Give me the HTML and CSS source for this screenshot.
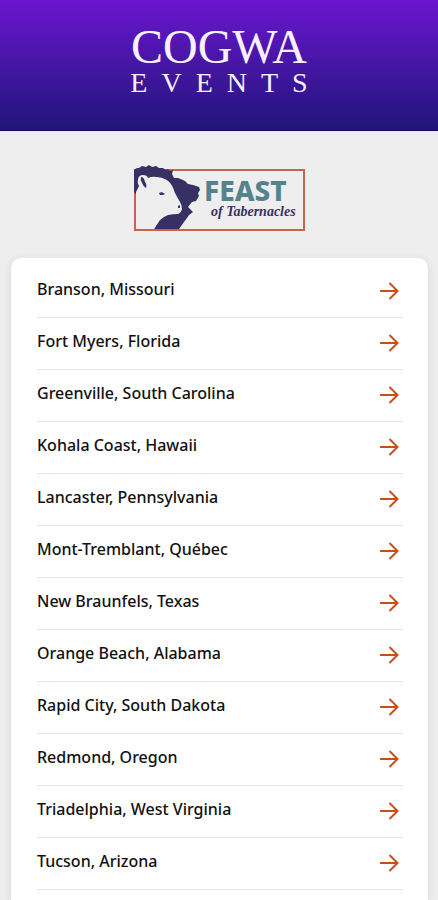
FILE: index.html
```html
<!DOCTYPE html>
<html lang="en">
<head>
<meta charset="utf-8">
<meta name="viewport" content="width=device-width, initial-scale=1">
<title>COGWA Events</title>
<link rel="stylesheet" href="styles.css">
</head>
<body>
<svg class="symbols" aria-hidden="true">
  <symbol id="arrow" viewBox="0 0 20 20">
    <path d="M1 10H18M10.5 2L18.5 10L10.5 18"/>
  </symbol>
</svg>
<header class="header">
  <h1 class="brand">
    <span class="brand-name">COGWA</span>
    <span class="brand-sub">EVENTS</span>
  </h1>
</header>
<main class="main">
  <svg class="feast-logo" viewBox="0 0 171 66" role="img" aria-label="Feast of Tabernacles">
    <rect class="logo-frame" x="1" y="5" width="169" height="60"/>
    <path class="logo-mane" d="M0 27V5L3 3L5 3L8 1L12 2L15 0L18 2L22 1L25 3L29 3L32 5L34 4L36 6L39 5L38 9L40 13L44 13L49 15L51 16L54 19L59 20L65 22L66 25L64 28L65 31L62 36L58 37L54 42L56 44L59 47L55 50L53 53L50 57L45 64H20L25 55Z"/>
    <path class="logo-face" d="M2 27L5 21Q3 18 4 14Q5 10 9 10Q13 10 14 13Q18 11 23 12Q33 13 37 19Q39 22 41 28Q43 32 46 37Q48 40 48 44Q47 48 44 49Q39 49 34 50Q29 52 26 55L20 64H2Z"/>
    <path class="logo-mane" d="M7 12Q10 12 11 17Q13 19 12 23Q9 21 8 18Q6 15 7 12ZM25 28Q28 26 31 29L29 30L26 30ZM44 41L46 40L46 43L44 43Z"/>
    <text class="logo-title" x="70" y="36">FEAST</text>
    <text class="logo-script" x="77" y="51">of Tabernacles</text>
  </svg>
  <nav class="card" aria-label="Feast locations">
    <ul class="list">
      <li><a class="row" href="#branson">Branson, Missouri<svg class="arrow" aria-hidden="true"><use href="#arrow"/></svg></a></li>
      <li><a class="row" href="#fort-myers">Fort Myers, Florida<svg class="arrow" aria-hidden="true"><use href="#arrow"/></svg></a></li>
      <li><a class="row" href="#greenville">Greenville, South Carolina<svg class="arrow" aria-hidden="true"><use href="#arrow"/></svg></a></li>
      <li><a class="row" href="#kohala">Kohala Coast, Hawaii<svg class="arrow" aria-hidden="true"><use href="#arrow"/></svg></a></li>
      <li><a class="row" href="#lancaster">Lancaster, Pennsylvania<svg class="arrow" aria-hidden="true"><use href="#arrow"/></svg></a></li>
      <li><a class="row" href="#mont-tremblant">Mont-Tremblant, Québec<svg class="arrow" aria-hidden="true"><use href="#arrow"/></svg></a></li>
      <li><a class="row" href="#new-braunfels">New Braunfels, Texas<svg class="arrow" aria-hidden="true"><use href="#arrow"/></svg></a></li>
      <li><a class="row" href="#orange-beach">Orange Beach, Alabama<svg class="arrow" aria-hidden="true"><use href="#arrow"/></svg></a></li>
      <li><a class="row" href="#rapid-city">Rapid City, South Dakota<svg class="arrow" aria-hidden="true"><use href="#arrow"/></svg></a></li>
      <li><a class="row" href="#redmond">Redmond, Oregon<svg class="arrow" aria-hidden="true"><use href="#arrow"/></svg></a></li>
      <li><a class="row" href="#triadelphia">Triadelphia, West Virginia<svg class="arrow" aria-hidden="true"><use href="#arrow"/></svg></a></li>
      <li><a class="row" href="#tucson">Tucson, Arizona<svg class="arrow" aria-hidden="true"><use href="#arrow"/></svg></a></li>
    </ul>
  </nav>
</main>
</body>
</html>
```
FILE: styles.css
```css
* {
  box-sizing: border-box;
}

body {
  margin: 0;
  min-height: 100vh;
  display: flex;
  flex-direction: column;
  background: #eeeeee;
  color: #111111;
  font-family: "Noto Sans", sans-serif;
}

.symbols {
  display: none;
}

.header {
  padding: 24px 0 34px;
  background: linear-gradient(#6a16cf, #211579);
  border-bottom: 1px solid #14085f;
}

.brand {
  margin: 0;
  display: flex;
  flex-direction: column;
  align-items: center;
  color: #f6f0ff;
  font-family: "Liberation Serif", serif;
  font-weight: 400;
}

.brand-name {
  font-size: 48px;
  line-height: 46px;
}

.brand-sub {
  padding-left: 14px;
  font-size: 28px;
  line-height: 26px;
  letter-spacing: 14px;
}

.main {
  flex: 1;
  display: flex;
  flex-direction: column;
  padding-top: 34px;
}

.feast-logo {
  width: 171px;
  height: 66px;
  margin-bottom: 27px;
  align-self: center;
}

.logo-frame {
  fill: none;
  stroke: #c4664f;
  stroke-width: 2;
}

.logo-mane {
  fill: #373064;
}

.logo-face {
  fill: #eeeeee;
}

.logo-title {
  fill: #55838d;
  font: 800 28px "Noto Sans", sans-serif;
}

.logo-script {
  fill: #373064;
  font: italic 700 14px "Liberation Serif", serif;
}

.card {
  flex: 1;
  margin: 0 10px 0 11px;
  padding: 8px 25px 0 26px;
  background: #ffffff;
  border-radius: 10px 10px 0 0;
  box-shadow: 0 2px 10px rgba(0, 0, 0, 0.1);
}

.list {
  margin: 0;
  padding: 0;
  list-style: none;
}

.row {
  display: flex;
  align-items: center;
  justify-content: space-between;
  height: 52px;
  padding: 0 4px 6px 0;
  border-bottom: 1px solid #e6e6e6;
  color: inherit;
  font-size: 16px;
  font-weight: 500;
  line-height: 24px;
  text-decoration: none;
}

.arrow {
  width: 20px;
  height: 20px;
  margin-top: 4px;
  fill: none;
  stroke: #c64f1c;
  stroke-width: 2;
}
```
